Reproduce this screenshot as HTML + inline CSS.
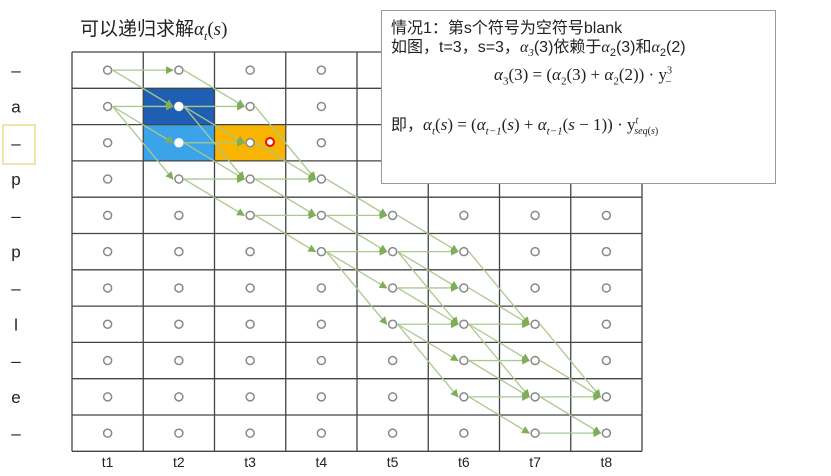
<!DOCTYPE html>
<html><head><meta charset="utf-8"><style>
body{margin:0;width:831px;height:476px;background:#fff;overflow:hidden;font-family:"Liberation Sans","Noto Sans CJK SC",sans-serif;position:relative}
.t{position:absolute;color:#222;white-space:nowrap}
.box{position:absolute;left:381px;top:10px;width:395px;height:174px;border:1.5px solid #999;background:#fff;box-sizing:border-box}
.m{font-family:"Liberation Serif","Noto Serif CJK SC",serif;font-style:italic}
.box div{white-space:nowrap}
</style></head><body>
<div class="t" style="left:80px;top:14px;font-size:19px;">可以递归求解<span class="m">α</span><sub style="font-size:12px" class="m">t</sub><span style="font-family:'Liberation Serif',serif">(<i>s</i>)</span></div>
<svg id="g" width="831" height="476" style="position:absolute;left:0;top:0"></svg>
<div class="box">
<div style="position:absolute;left:9px;top:8px;font-size:16px;line-height:19px;color:#222">情况1：第s个符号为空符号blank<br>如图，t=3，s=3，<span class="m">α</span><sub class="m" style="font-size:11px">3</sub>(3)依赖于<span class="m">α</span><sub style="font-size:11px">2</sub>(3)和<span class="m">α</span><sub style="font-size:11px">2</sub>(2)</div>
<div style="position:absolute;left:112px;top:54px;font-size:17px;font-family:'Liberation Serif',serif;color:#222"><i>α</i><sub style="font-size:11px">3</sub>(3) = (<i>α</i><sub style="font-size:11px">2</sub>(3) + <i>α</i><sub style="font-size:11px">2</sub>(2)) · y<sup style="font-size:10px">3</sup><sub style="font-size:10px;margin-left:-6px">–</sub></div>
<div style="position:absolute;left:9px;top:100px;font-size:16px;color:#222">即，<span style="font-family:'Liberation Serif',serif;font-size:17px"><i>α<sub style="font-size:11px">t</sub></i>(<i>s</i>) = (<i>α<sub style="font-size:11px">t−1</sub></i>(<i>s</i>) + <i>α<sub style="font-size:11px">t−1</sub></i>(<i>s</i> − 1)) · y<sup style="font-size:10px"><i>t</i></sup><sub style="font-size:10px;margin-left:-4px"><i>seq</i>(<i>s</i>)</sub></span></div>
</div>
<script>
var svg=document.getElementById('g'),h='';
var L=72,T=52,CW=71.25,RH=36.3,R=11,C=8;
var lab=['–','a','–','p','–','p','–','l','–','e','–'];
var V=[[0,1],[0,1,2,3],[1,2,3,4],[3,4,5],[4,5,6,7],[5,6,7,8,9],[7,8,9,10],[9,10]];
h+='<defs><marker id="a" markerWidth="8" markerHeight="8" refX="7" refY="4" orient="auto" markerUnits="userSpaceOnUse"><path d="M0,0 L8,4 L0,8z" fill="#7fae5a"/></marker></defs>';
h+='<rect x="'+(L+CW)+'" y="'+(T+RH)+'" width="'+CW+'" height="'+RH+'" fill="#1f5fb3"/>';
h+='<rect x="'+(L+CW)+'" y="'+(T+2*RH)+'" width="'+CW+'" height="'+RH+'" fill="#3ba3ea"/>';
h+='<rect x="'+(L+2*CW)+'" y="'+(T+2*RH)+'" width="'+CW+'" height="'+RH+'" fill="#f8b400"/>';
for(var i=0;i<=C;i++)h+='<line x1="'+(L+i*CW)+'" y1="'+T+'" x2="'+(L+i*CW)+'" y2="'+(T+R*RH)+'" stroke="#444" stroke-width="1.3"/>';
for(var j=0;j<=R;j++)h+='<line x1="'+L+'" y1="'+(T+j*RH)+'" x2="'+(L+C*CW)+'" y2="'+(T+j*RH)+'" stroke="#444" stroke-width="1.3"/>';
function nx(t){return L+(t+0.5)*CW}function ny(s){return T+(s+0.5)*RH}
function nxt(s){var r=[s];if(s+1<R)r.push(s+1);if(s+2<R&&lab[s+2]!='–'&&lab[s+2]!=lab[s])r.push(s+2);return r}
for(var t=0;t<C-1;t++)V[t].forEach(function(s){nxt(s).forEach(function(q){if(V[t+1].indexOf(q)>=0){
h+='<line x1="'+(nx(t)+5)+'" y1="'+ny(s)+'" x2="'+(nx(t+1)-6)+'" y2="'+ny(q)+'" stroke="#a9c98f" stroke-width="1.3" marker-end="url(#a)"/>';}})});
for(t=0;t<C;t++)for(var s=0;s<R;s++){var w=(t==1&&(s==1||s==2));h+='<circle cx="'+nx(t)+'" cy="'+ny(s)+'" r="4" fill="#fff" stroke="'+(w?'#fff':'#888')+'" stroke-width="1.5"/>';}
h+='<circle cx="270" cy="142" r="4" fill="#fff" stroke="#e01010" stroke-width="2"/>';
for(s=0;s<R;s++)h+='<text x="16" y="'+(ny(s)+6)+'" font-size="17" text-anchor="middle" fill="#222" font-family="Liberation Sans">'+lab[s]+'</text>';
h+='<rect x="3" y="125" width="32" height="39" fill="none" stroke="#f0d890" stroke-width="1.5"/>';
for(t=0;t<C;t++)h+='<text x="'+nx(t)+'" y="467" font-size="14" text-anchor="middle" fill="#222" font-family="Liberation Sans">t'+(t+1)+'</text>';
svg.innerHTML=h;
</script>
</body></html>
